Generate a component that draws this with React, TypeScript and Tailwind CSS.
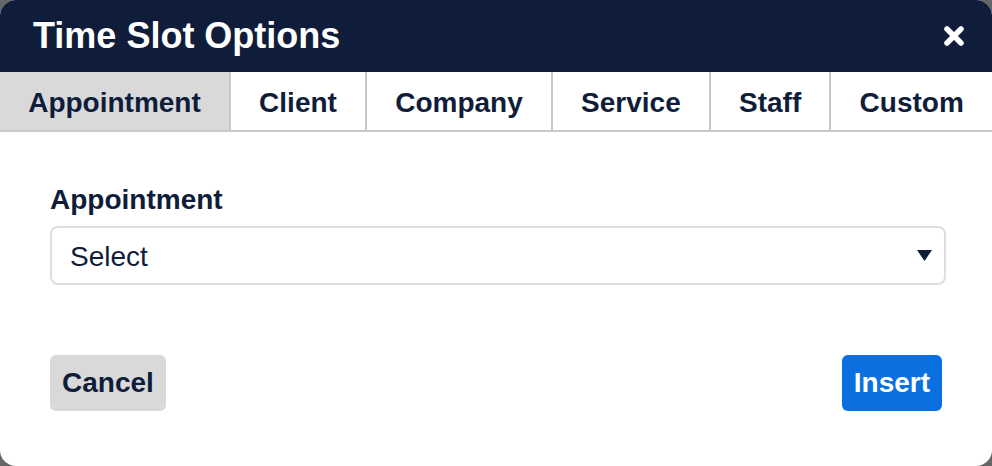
import { useState } from "react";

/* =========================
   TABS
========================= */
const TABS = ["Appointment", "Client", "Company", "Service", "Staff", "Custom"];

export default function App() {
  const [active, setActive] = useState("Appointment");

  return (
    <div
      className="w-[992px] h-[466px] bg-[#666666] text-[#0f1d3b]"
      style={{ fontFamily: '"Liberation Sans", Arial, sans-serif' }}
    >
      <div className="w-full h-full bg-white rounded-2xl overflow-hidden flex flex-col">
        {/* HEADER */}
        <div className="h-[72px] bg-[#0f1d3b] flex items-center justify-between pl-[33px] pr-[27px]">
          <h1 className="text-[36px] font-bold text-white leading-none">
            Time Slot Options
          </h1>
          <button className="w-[22px] h-[22px] flex items-center justify-center">
            <svg width="22" height="22" viewBox="0 0 22 22">
              <path
                d="M4 4 L18 18 M18 4 L4 18"
                stroke="white"
                strokeWidth="5.5"
                strokeLinecap="round"
              />
            </svg>
          </button>
        </div>

        {/* TAB BAR */}
        <div className="flex border-b-2 border-[#c8c8c8]">
          {TABS.map((tab, i) => (
            <button
              key={tab}
              onClick={() => setActive(tab)}
              className={`grow h-[58px] pt-[3px] px-[27px] whitespace-nowrap text-[28px] font-bold leading-none ${
                i > 0 ? "border-l-2 border-[#c8c8c8]" : ""
              } ${active === tab ? "bg-[#d9d9d9]" : "bg-white"}`}
            >
              {tab}
            </button>
          ))}
        </div>

        {/* BODY */}
        <div className="flex-1 flex flex-col pt-[52px] px-[50px]">
          <label className="text-[28px] font-bold leading-[32px]">
            {active}
          </label>

          {/* SELECT */}
          <div className="mt-[10px] mr-[-4px] h-[59px] border-2 border-[#dedede] rounded-lg flex items-center justify-between pl-[18px] pr-[12px]">
            <span className="text-[28px] leading-none pt-[2px]">Select</span>
            <svg width="15" height="11" viewBox="0 0 15 11">
              <path d="M0 0 L15 0 L7.5 11 Z" fill="#0f1d3b" />
            </svg>
          </div>

          {/* ACTIONS */}
          <div className="mt-[70px] flex items-center justify-between">
            <button className="h-[56px] px-3 rounded-md bg-[#d9d9d9] text-[28px] font-bold leading-none">
              Cancel
            </button>
            <button className="h-[56px] px-3 rounded-md bg-[#0a6fdf] text-white text-[28px] font-bold leading-none">
              Insert
            </button>
          </div>
        </div>
      </div>
    </div>
  );
}
